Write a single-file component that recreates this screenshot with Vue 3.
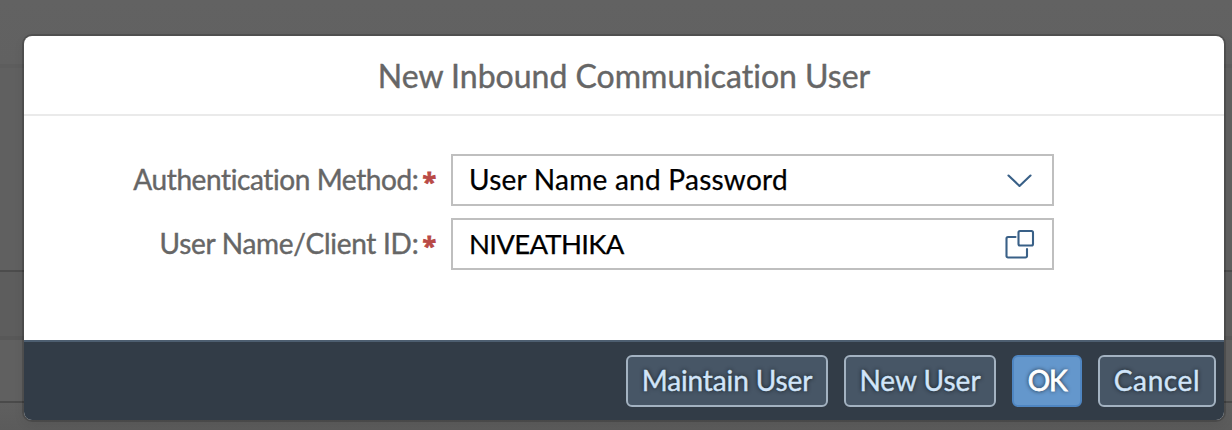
<script setup>
const fields = [
  { label: 'Authentication Method:', value: 'User Name and Password', icon: 'chevron', cls: 'auth' },
  { label: 'User Name/Client ID:', value: 'NIVEATHIKA', icon: 'help', cls: 'client' },
]
const buttons = [
  { text: 'Maintain User', cls: 'maintain' },
  { text: 'New User', cls: 'new' },
  { text: 'OK', cls: 'ok' },
  { text: 'Cancel', cls: 'cancel' },
]
</script>

<template>
  <div class="page">
    <section class="dialog" role="dialog">
      <header class="head"><span class="title">New Inbound Communication User</span></header>
      <main class="body">
        <div v-for="f in fields" :key="f.label" class="row" :class="f.cls">
          <label class="label"><span class="caption">{{ f.label }}</span><span class="star">*</span></label>
          <div class="field">
            <span class="value">{{ f.value }}</span>
            <svg v-if="f.icon === 'chevron'" class="icon" viewBox="0 0 32 32">
              <path d="M5.5 11.5 16.5 22 27.500 11.5" />
            </svg>
            <svg v-else class="icon" viewBox="0 0 32 32">
              <rect x="15.500" y="3" width="14.500" height="14.500" rx="1.500" />
              <path d="M12.500 9H5A1.500 1.500 0 0 0 3.500 10.500V28A1.500 1.500 0 0 0 5 29.500H22.500A1.500 1.500 0 0 0 24 28V21" />
            </svg>
          </div>
        </div>
      </main>
      <footer class="foot">
        <button v-for="b in buttons" :key="b.text" class="btn" :class="b.cls"><span>{{ b.text }}</span></button>
      </footer>
    </section>
  </div>
</template>

<style>
body { background: #5f5f5f; }
</style>

<style scoped>
.page {
  box-sizing: border-box;
  width: 1232px;
  height: 430px;
  padding: 36px 8px 10px 24px;
  overflow: hidden;
  font-family: Lato, "Open Sans", sans-serif;
  font-variant-ligatures: none;
  background: linear-gradient(to bottom,
    #626262 0, #616161 64px, #5d5d5d 64px, #5d5d5d 68px, #606060 68px, #606060 270px,
    #4c4c4c 270px, #4c4c4c 272px, #5d5d5d 272px, #5d5d5d 336px, #585858 336px, #585858 340px,
    #606060 340px, #606060 401px, #4a4a4a 401px, #4a4a4a 403px, #5f5f5f 403px, #5b5b5b 430px);
}
.dialog {
  width: 1200px;
  height: 384px;
  display: flex;
  flex-direction: column;
  border-radius: 8px;
  overflow: hidden;
  background: #fff;
  box-shadow: 0 0 0 2px rgba(0, 0, 0, 0.16), 0 4px 12px rgba(0, 0, 0, 0.08);
}
.head {
  box-sizing: border-box;
  height: 80px;
  display: flex;
  align-items: center;
  justify-content: center;
  border-bottom: 2px solid #eaeaea;
  color: #666;
  font-size: 32px;
  white-space: nowrap;
  -webkit-text-stroke: 0.4px currentColor;
}
.body {
  box-sizing: border-box;
  flex: 1;
  padding-top: 38px;
  display: flex;
  flex-direction: column;
  gap: 12px;
  font-size: 28px;
}
.row { display: flex; height: 52px; }
.label {
  box-sizing: border-box;
  width: 412px;
  margin-right: 15px;
  padding-bottom: 2px;
  display: flex;
  justify-content: flex-end;
  align-items: center;
  color: #666;
  white-space: nowrap;
}
.caption { -webkit-text-stroke: 0.4px currentColor; }
.value { -webkit-text-stroke: 0.25px currentColor; }
.auth .caption { letter-spacing: -0.4px; }
.client .caption { letter-spacing: -0.27px; }
.auth .value { letter-spacing: 0.25px; }
.client .value { font-size: 27.5px; letter-spacing: -0.7px; }
.star {
  color: #b94a46;
  font-family: "Open Sans", sans-serif;
  font-size: 25px;
  font-weight: 700;
  line-height: 34px;
  padding-top: 3px;
  margin-left: 4px;
  -webkit-text-stroke: 0.8px currentColor;
}
.field {
  box-sizing: border-box;
  width: 603px;
  padding: 0 17px 0 16px;
  display: flex;
  align-items: center;
  justify-content: space-between;
  border: 2px solid #bfbfbf;
  color: #000;
}
.value { padding-bottom: 2px; }
.icon {
  width: 32px;
  height: 32px;
  fill: none;
  stroke: #396087;
  stroke-width: 2.1;
  stroke-linecap: round;
  stroke-linejoin: round;
}
.foot {
  box-sizing: border-box;
  height: 80px;
  padding: 0 8px;
  display: flex;
  align-items: center;
  justify-content: flex-end;
  gap: 16px;
  border-top: 2px solid #4d5e70;
  background: #323c47;
}
.btn {
  box-sizing: border-box;
  height: 52px;
  padding: 0 0 2px;
  display: flex;
  align-items: center;
  justify-content: center;
  border: 2px solid #a3b2c1;
  border-radius: 6px;
  background: #475666;
  color: #d1e5f9;
  font: 28px Lato, "Open Sans", sans-serif;
  font-variant-ligatures: none;
  text-shadow: 0 0 4px #10151a;
  white-space: nowrap;
  -webkit-text-stroke: 0.4px currentColor;
}
.maintain { width: 202px; letter-spacing: -0.12px; }
.new { width: 152px; }
.ok { width: 70px; background: #6497cc; border-color: #4f86c2; color: #fff; letter-spacing: -1.2px; -webkit-text-stroke-width: 0.8px; }
.cancel { width: 118px; letter-spacing: 0.6px; }
</style>
